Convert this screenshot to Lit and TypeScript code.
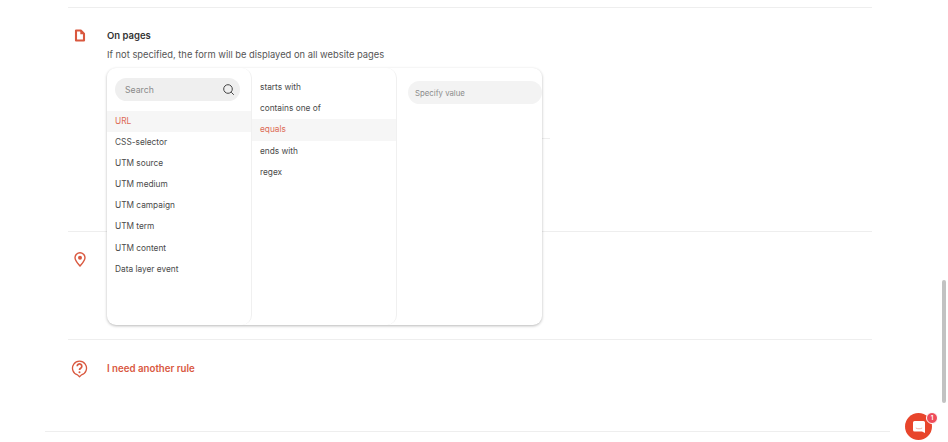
import { LitElement, html, css } from "lit";
import { customElement } from "lit/decorators.js";

const fields = ["URL", "CSS-selector", "UTM source", "UTM medium", "UTM campaign", "UTM term", "UTM content", "Data layer event"];
const ops = ["starts with", "contains one of", "equals", "ends with", "regex"];

@customElement("app-root")
export class AppRoot extends LitElement {
  static styles = css`
    :host { display: block; position: relative; width: 948px; height: 442px; overflow: hidden; background: #fff;
      font-family: "Inter", "Liberation Sans", sans-serif; color: #3c3c3c; }
    .page { display: flex; flex-direction: column; margin: 0 76px 0 68px; padding-top: 7px; }
    .row { display: flex; border-top: 1px solid #eeeeee; box-sizing: border-box; }
    .r1 { height: 224px; }
    .r2 { height: 108px; }
    .r3 { height: 92px; }
    .ico { flex: 0 0 39px; display: flex; justify-content: flex-start; box-sizing: border-box; }
    .r1 .ico { padding-top: 21px; padding-left: 6px; }
    .r2 .ico { padding-top: 20px; padding-left: 6px; }
    .r3 .ico { padding-top: 20px; padding-left: 3px; }
    .r1 .body { padding-top: 21px; flex: 1; }
    h3 { margin: 0; font-size: 9.5px; line-height: 13px; font-weight: 600; color: #333; }
    p { margin: 6px 0 0; font-size: 9.36px; line-height: 13px; color: #555; }
    .link { margin-top: 22px; font-size: 9.7px; line-height: 14px; font-weight: 600; color: #d9583f; }
    .ghost { margin-top: 77px; width: 443px; border-bottom: 1px solid #eeeeee; }
    .popup { position: absolute; left: 107px; top: 68px; width: 435px; height: 257px; display: flex; background: #fff;
      border-radius: 9px; box-shadow: 0 1px 3px rgba(0,0,0,.28); overflow: hidden; }
    .col { flex: 0 0 145px; box-sizing: border-box; border-right: 1px solid #f0f0f0; border-radius: 0 10px 10px 0; font-size: 8.3px; color: #4a4a4a; }
    .col:last-child { border-right: 0; }
    .c1 { padding-top: 10px; }
    .c2 { padding-top: 9px; }
    .c3 { padding: 13px 0 0 11px; }
    .search { display: flex; align-items: center; justify-content: space-between; margin: 0 11px 9.5px 8px; height: 23px; padding: 0 5px 0 10px;
      border-radius: 12px; background: #efefef; color: #8a8a8a; font-size: 8.7px; }
    .item { height: 21.2px; line-height: 21.2px; padding-left: 8px; }
    .item.on { background: #f6f6f6; color: #dd6a55; }
    .value { height: 23px; line-height: 24px; padding-left: 7px; border-radius: 12px; background: #f3f3f3; color: #8c8c8c; font-size: 7.8px; }
    .scroll { position: absolute; left: 942px; top: 280px; width: 4px; height: 123px; border-radius: 2px; background: #c2c2c2; }
    .foot { position: absolute; left: 45px; top: 431px; width: 845px; border-top: 1px solid #eeeeee; }
    .chat { position: absolute; left: 905px; top: 413px; width: 27px; height: 27px; border-radius: 50%; background: #e8452b; display: flex; align-items: center; justify-content: center; }
    .badge { position: absolute; left: 926px; top: 412px; width: 12px; height: 12px; border-radius: 50%; background: #ee4c5a; border: 1.500px solid #fff; box-sizing: border-box;
      color: #fff; font-size: 6px; line-height: 9px; text-align: center; font-weight: 700; }
    svg { display: block; }
  `;

  render() {
    return html`
      <div class="page">
        <div class="row r1">
          <div class="ico">
            <svg width="12" height="13" viewBox="0 0 12 13"><path d="M2 1.500h4.800L10 4.800v6.700H2z" fill="#fff" stroke="#d9583f" stroke-width="2.100" stroke-linejoin="round"/><path d="M6.300 1v4.200h4.400z" fill="#d9583f"/></svg>
          </div>
          <div class="body">
            <h3>On pages</h3>
            <p>If not specified, the form will be displayed on all website pages</p>
            <div class="ghost"></div>
          </div>
        </div>
        <div class="row r2">
          <div class="ico">
            <svg width="12" height="15" viewBox="0 0 12 15" fill="none"><path d="M6 14C3.800 11.400 1 8.600 1 5.700a5 5 0 0 1 10 0C11 8.600 8.200 11.400 6 14z" stroke="#d9583f" stroke-width="1.400"/><circle cx="6" cy="5.700" r="2" fill="#d9583f"/></svg>
          </div>
        </div>
        <div class="row r3">
          <div class="ico">
            <svg width="17" height="18" viewBox="0 0 17 18" fill="none"><path d="M8.500 16.800 6.500 14.900A7 7 0 1 1 10.500 14.900z" stroke="#d9583f" stroke-width="1.300" stroke-linejoin="round"/><path d="M6.200 6.200a2.300 2.300 0 1 1 3.500 2c-.8.500-1.200.9-1.200 1.700" stroke="#d9583f" stroke-width="1.700"/><circle cx="8.500" cy="12.200" r="1" fill="#d9583f"/></svg>
          </div>
          <div class="link">I need another rule</div>
        </div>
      </div>
      <div class="foot"></div>
      <div class="popup">
        <div class="col c1">
          <div class="search"><span>Search</span>
            <svg width="13" height="13" viewBox="0 0 13 13" fill="none" stroke="#444" stroke-width="1"><circle cx="6" cy="6" r="4.300"/><path d="m9.200 9.200 2.600 2.600"/></svg>
          </div>
          ${fields.map((f, i) => html`<div class="item ${i === 0 ? "on" : ""}">${f}</div>`)}
        </div>
        <div class="col c2">
          ${ops.map((o, i) => html`<div class="item ${i === 2 ? "on" : ""}">${o}</div>`)}
        </div>
        <div class="col c3"><div class="value">Specify value</div></div>
      </div>
      <div class="scroll"></div>
      <div class="chat">
        <svg width="14" height="14" viewBox="0 0 14 14"><path d="M2.500 1h9A1.500 1.500 0 0 1 13 2.500V13l-3-1.600H2.500A1.500 1.500 0 0 1 1 9.900V2.500A1.500 1.500 0 0 1 2.500 1z" fill="#fff"/><path d="M3.800 8c1.800 1.100 4.600 1.100 6.400 0" stroke="#e8a090" stroke-width=".8" fill="none"/></svg>
      </div>
      <div class="badge">1</div>
    `;
  }
}
